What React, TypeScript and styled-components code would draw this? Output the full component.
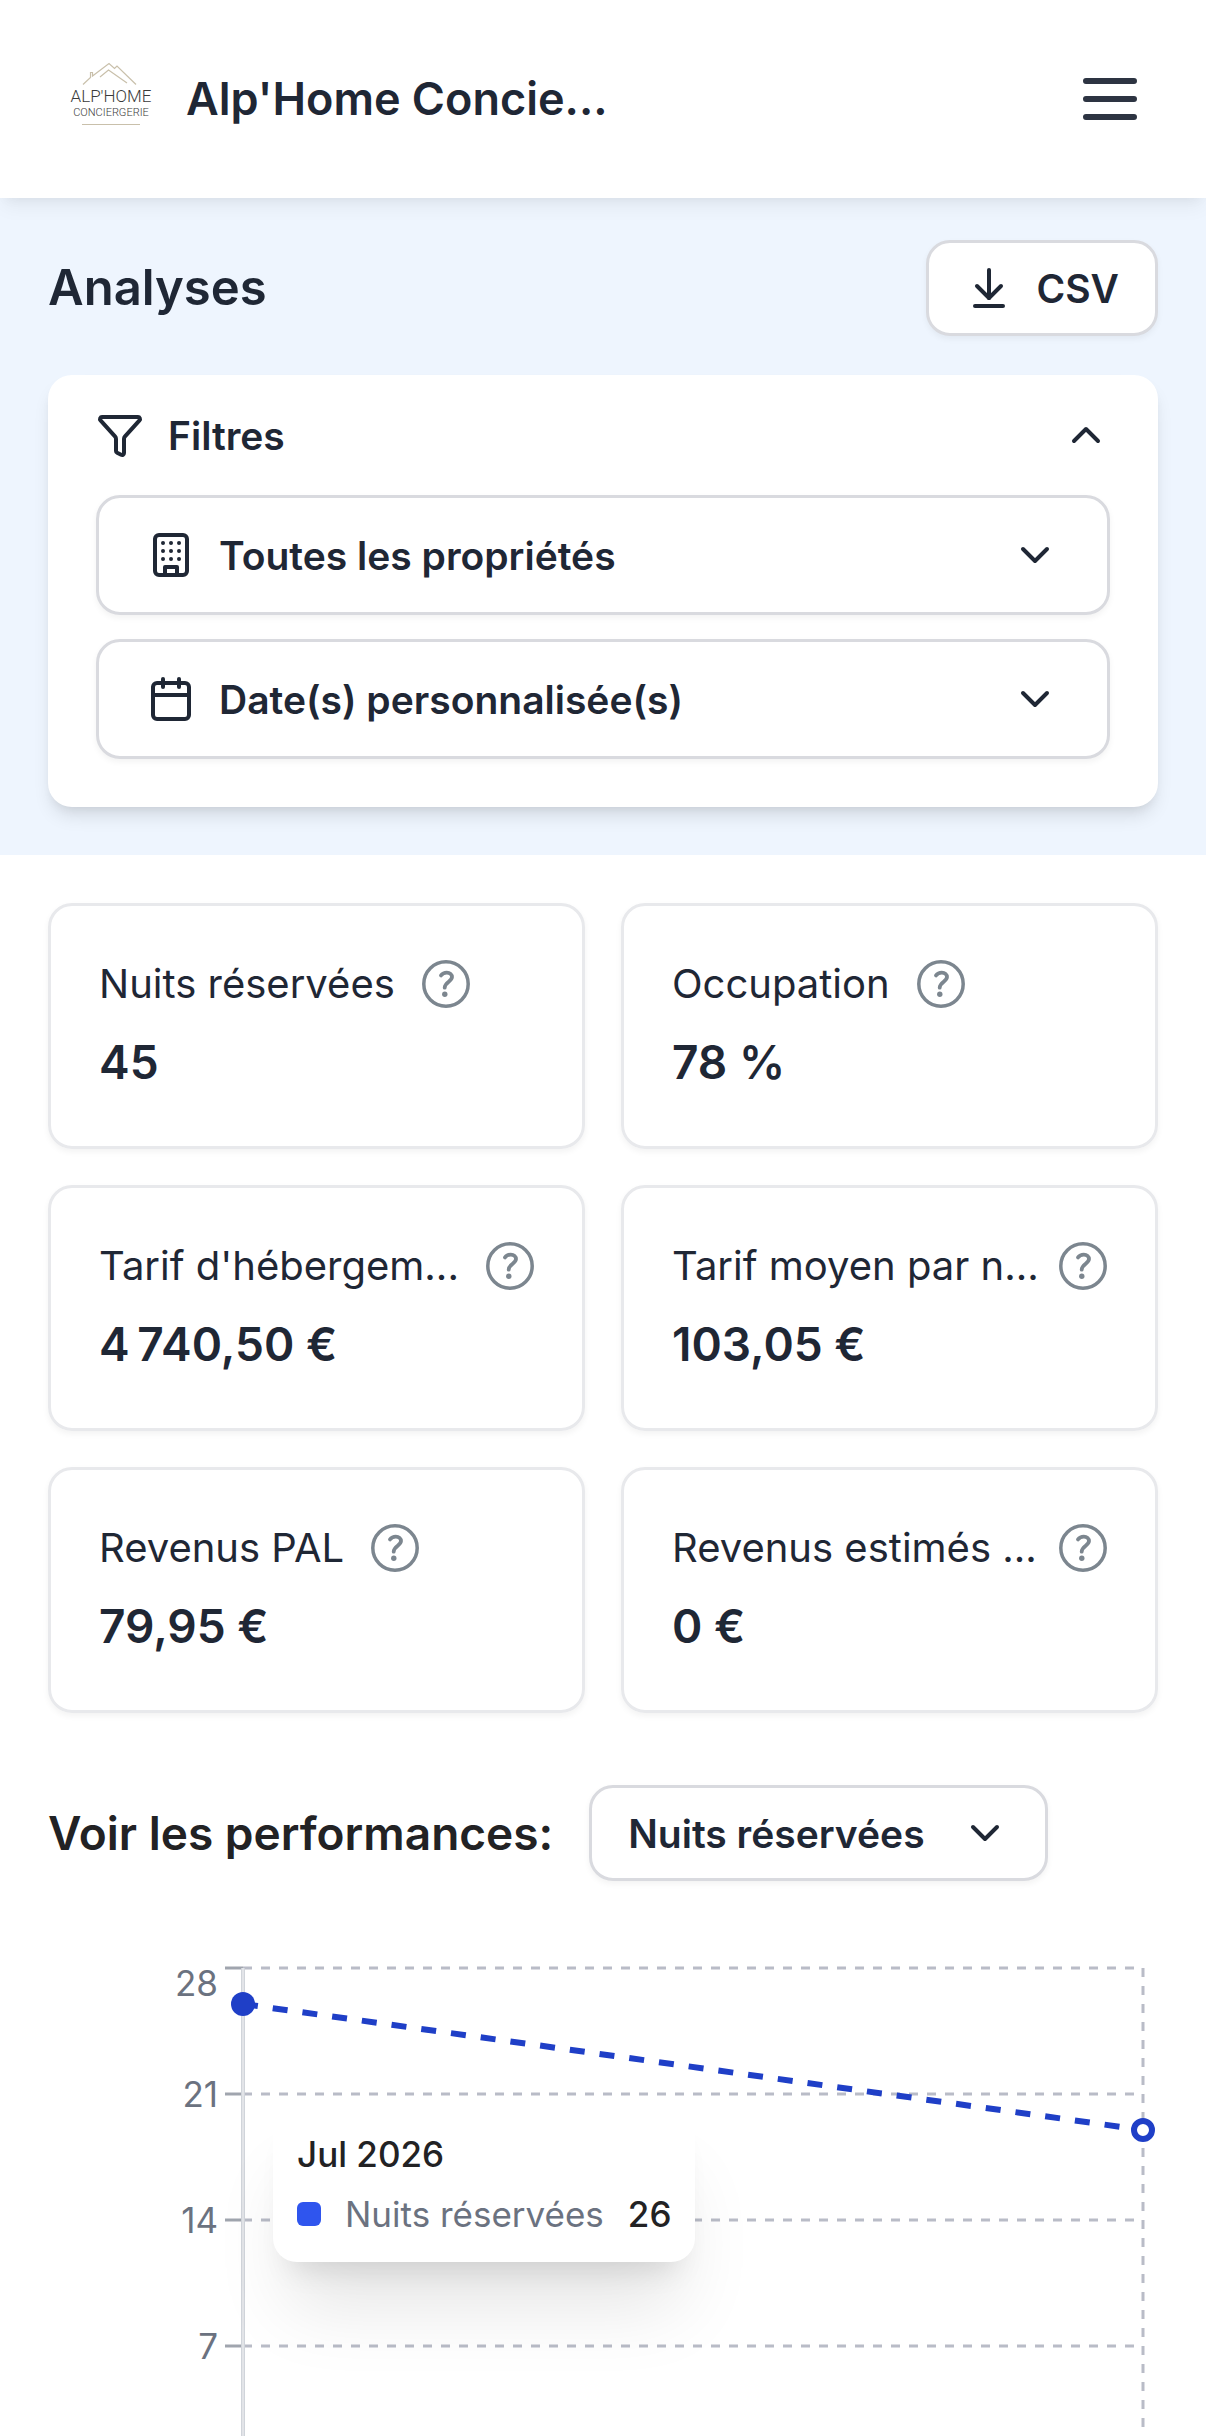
import React from 'react';
import styled, { createGlobalStyle } from 'styled-components';
import { ArrowDownToLine, Calendar, ChevronDown, ChevronUp, Funnel } from 'lucide-react';

const color = {
  ink: '#1f2735',
  heading: '#222224',
  muted: '#6b7280',
  help: '#7c868f',
  border: '#d9dadf',
  cardBorder: '#e8e9ec',
  grid: '#b9bcc7',
  axis: '#e2e4e8',
  tint: '#eef5fe',
  line: '#1f3fc7',
  swatch: '#2f55ee',
};

const GlobalStyle = createGlobalStyle`
  *, *::before, *::after { box-sizing: border-box; }
  body {
    margin: 0;
    background: #ffffff;
    color: ${color.ink};
    font-family: Inter, "Liberation Sans", sans-serif;
  }
  h1, h2, p, dl, dt, dd { margin: 0; }
  button, select { font: inherit; color: inherit; }
`;

const Page = styled.div`
  display: flex;
  flex-direction: column;
  height: 100vh;
  overflow: hidden;
`;

const Header = styled.header`
  position: relative;
  z-index: 1;
  display: flex;
  flex-shrink: 0;
  align-items: center;
  justify-content: space-between;
  height: 198px;
  padding: 0 60px;
  background: #ffffff;
  box-shadow: 0 12px 18px -3px rgba(0, 0, 0, 0.05), 0 6px 12px -6px rgba(0, 0, 0, 0.06);
`;

const Brand = styled.a`
  display: flex;
  align-items: center;
  gap: 24px;
  min-width: 0;
  color: inherit;
  text-decoration: none;
`;

const BrandName = styled.span`
  font-size: 45px;
  line-height: 72px;
  font-weight: 600;
  white-space: nowrap;
`;

const LogoText = styled.text`
  font-family: Roboto, sans-serif;
  font-weight: 300;
  fill: #3a3a3a;
`;

const IconButton = styled.button`
  display: flex;
  padding: 0;
  border: 0;
  background: none;
`;

const Main = styled.main`
  flex: 1;
  min-height: 0;
  overflow-y: auto;
  scrollbar-width: none;
`;

const Intro = styled.section`
  display: flex;
  flex-direction: column;
  gap: 39px;
  padding: 42px 48px 48px;
  background: ${color.tint};
`;

const TitleRow = styled.div`
  display: flex;
  align-items: center;
  justify-content: space-between;
`;

const Title = styled.h1`
  font-size: 49px;
  line-height: 84px;
  font-weight: 600;
`;

const ExportButton = styled.button`
  display: flex;
  align-items: center;
  gap: 24px;
  height: 96px;
  padding: 0 36px;
  border: 3px solid ${color.border};
  border-radius: 24px;
  background: #ffffff;
  box-shadow: 0 3px 6px rgba(0, 0, 0, 0.05);
  font-size: 39px;
  font-weight: 600;
`;

const FilterCard = styled.div`
  display: flex;
  flex-direction: column;
  gap: 24px;
  padding: 24px 48px 48px;
  border-radius: 24px;
  background: #ffffff;
  box-shadow: 0 12px 18px -3px rgba(0, 0, 0, 0.1), 0 6px 12px -6px rgba(0, 0, 0, 0.1);
`;

const FilterToggle = styled.button`
  display: flex;
  align-items: center;
  gap: 24px;
  height: 72px;
  padding: 0;
  border: 0;
  background: none;
  font-size: 39px;
  font-weight: 600;

  & > :last-child { margin-left: auto; }
`;

const Field = styled.label<{ $compact?: boolean }>`
  position: relative;
  display: flex;
  align-items: center;
  gap: 24px;
  flex: ${(p) => (p.$compact ? '0 1 459px' : '0 0 auto')};
  height: ${(p) => (p.$compact ? 96 : 120)}px;
  padding: 0 ${(p) => (p.$compact ? 36 : 48)}px;
  border: 3px solid ${color.border};
  border-radius: 24px;
  background: #ffffff;
  box-shadow: 0 3px 6px rgba(0, 0, 0, 0.05);
`;

const Select = styled.select`
  flex: 1;
  min-width: 0;
  height: 100%;
  padding: 0;
  border: 0;
  outline: 0;
  appearance: none;
  background: transparent;
  font-size: 39px;
  font-weight: 600;
`;

const StatGrid = styled.dl`
  display: grid;
  grid-template-columns: 1fr 1fr;
  gap: 36px;
  padding: 48px 48px 72px;
`;

const StatCard = styled.div`
  display: flex;
  flex-direction: column;
  gap: 12px;
  min-width: 0;
  padding: 48px;
  border: 3px solid ${color.cardBorder};
  border-radius: 24px;
  box-shadow: 0 3px 6px rgba(0, 0, 0, 0.05);
`;

const StatHead = styled.dt<{ $spread?: boolean }>`
  display: flex;
  align-items: center;
  justify-content: ${(p) => (p.$spread ? 'space-between' : 'flex-start')};
  gap: ${(p) => (p.$spread ? 12 : 27)}px;
`;

const StatLabel = styled.span`
  font-size: 40px;
  line-height: 60px;
  white-space: nowrap;
`;

const StatValue = styled.dd`
  font-size: 46px;
  line-height: 72px;
  font-weight: 600;
`;

const PerformanceRow = styled.div`
  display: flex;
  align-items: center;
  gap: 36px;
  padding: 0 48px;
`;

const PerformanceTitle = styled.h2`
  color: ${color.heading};
  font-size: 46px;
  line-height: 72px;
  font-weight: 600;
  white-space: nowrap;
`;

const ChartArea = styled.figure`
  position: relative;
  margin: 87px 63px 96px 243px;
`;

const Plot = styled.svg`
  display: block;
  width: 100%;
  height: 504px;
  overflow: visible;
`;

const AxisLabel = styled.text`
  fill: ${color.muted};
  font-size: 35px;
  text-anchor: end;
`;

const Tooltip = styled.figcaption`
  position: absolute;
  top: 138px;
  left: 30px;
  display: flex;
  flex-direction: column;
  gap: 12px;
  padding: 24px;
  border-radius: 24px;
  background: #ffffff;
  box-shadow: 0 60px 75px -15px rgba(0, 0, 0, 0.1), 0 24px 30px -18px rgba(0, 0, 0, 0.12);
  color: ${color.heading};
  font-size: 35px;
  line-height: 48px;
`;

const TooltipRow = styled.div`
  display: flex;
  align-items: center;
  gap: 24px;
`;

const Swatch = styled.span`
  width: 24px;
  height: 24px;
  border-radius: 6px;
  background: ${color.swatch};
`;

const TooltipLabel = styled.span`
  color: ${color.muted};
`;

const Strong = styled.span`
  font-weight: 500;
`;

const Logo = () => (
  <svg width="102" height="78" viewBox="60 60 102 78" role="img" aria-label="Alp'Home Conciergerie">
    <g fill="none" stroke="#c9c0ab" strokeWidth="1.2">
      <path d="M83 84.5 90.5 77.5V72.5H92.5V76L109 63.5 114.5 68.5 117 66 136 84.5" />
      <path d="M100 77 108.5 70 127 83" />
      <path d="M82 124.5H140" />
    </g>
    <LogoText x="111" y="102" fontSize="17" textAnchor="middle">ALP'HOME</LogoText>
    <LogoText x="111" y="116" fontSize="11" textAnchor="middle">CONCIERGERIE</LogoText>
  </svg>
);

const MenuIcon = () => (
  <svg width="72" height="72" viewBox="0 0 24 24" fill="none" stroke="#2d3442" strokeWidth="2" strokeLinecap="round">
    <path d="M4 6h16M4 12h16M4 18h16" />
  </svg>
);

const BuildingIcon = () => (
  <svg width="48" height="48" viewBox="0 0 24 24" fill="none" stroke="currentColor" strokeWidth="2" strokeLinecap="round" strokeLinejoin="round">
    <rect x="4" y="2" width="16" height="20" rx="2" />
    <path d="M9 22v-4h6v4" />
    <path d="M8 6h.01M12 6h.01M16 6h.01M8 10h.01M12 10h.01M16 10h.01M8 14h.01M12 14h.01M16 14h.01" />
  </svg>
);

const HelpIcon = () => (
  <svg width="48" height="48" viewBox="0 0 48 48" fill="none" stroke={color.help} strokeLinecap="round">
    <circle cx="24" cy="24" r="22.2" strokeWidth="3.5" />
    <path d="M19 15.4C20.4 13.5 22.6 12.6 24.8 12.6c3.1 0 5.2 1.8 5.2 4.5 0 4.4-7.2 4.9-7.3 10.6" strokeWidth="3.8" />
    <circle cx="22.8" cy="34.3" r="2.7" fill={color.help} stroke="none" />
  </svg>
);

const stats = [
  { label: 'Nuits réservées', value: '45' },
  { label: 'Occupation', value: '78 %' },
  { label: "Tarif d'hébergem...", value: '4\u202f740,50 €', spread: true },
  { label: 'Tarif moyen par n...', value: '103,05 €', spread: true },
  { label: 'Revenus PAL', value: '79,95 €' },
  { label: 'Revenus estimés ...', value: '0 €', spread: true },
];

const PX_PER_NIGHT = 18;
const MAX_NIGHTS = 28;
const yOf = (nights: number) => (MAX_NIGHTS - nights) * PX_PER_NIGHT;
const ticks = [28, 21, 14, 7];

function Chart() {
  return (
    <ChartArea>
      <Plot>
        {ticks.map((tick) => (
          <g key={tick}>
            <line x1="0" x2="100%" y1={yOf(tick)} y2={yOf(tick)} stroke={color.grid} strokeWidth="3" strokeDasharray="9 9" />
            <line x1="-18" x2="0" y1={yOf(tick)} y2={yOf(tick)} stroke="#a0a5ae" strokeWidth="3" />
            <AxisLabel x="-25" y={Math.max(yOf(tick), 15) + 13}>{tick}</AxisLabel>
          </g>
        ))}
        <line x1="100%" x2="100%" y1="0" y2={yOf(0)} stroke={color.grid} strokeWidth="3" strokeDasharray="9 9" />
        <line x1="0" x2="0" y1="0" y2={yOf(0)} stroke="#d0d4da" strokeWidth="4" />
        <line x1="0" x2="0" y1="0" y2={yOf(0)} stroke={color.axis} strokeWidth="2" />
        <line x1="0" x2="100%" y1={yOf(26)} y2={yOf(19)} stroke={color.line} strokeWidth="6" strokeDasharray="15 15" />
        <circle cx="0" cy={yOf(26)} r="12" fill={color.line} />
        <circle cx="100%" cy={yOf(19)} r="9" fill="#ffffff" stroke={color.line} strokeWidth="6" />
      </Plot>
      <Tooltip>
        <Strong>Jul 2026</Strong>
        <TooltipRow>
          <Swatch />
          <TooltipLabel>Nuits réservées</TooltipLabel>
          <Strong>26</Strong>
        </TooltipRow>
      </Tooltip>
    </ChartArea>
  );
}

export default function App() {
  return (
    <Page>
      <GlobalStyle />
      <Header>
        <Brand href="#">
          <Logo />
          <BrandName>Alp'Home Concie...</BrandName>
        </Brand>
        <IconButton type="button" aria-label="Menu">
          <MenuIcon />
        </IconButton>
      </Header>
      <Main>
        <Intro>
          <TitleRow>
            <Title>Analyses</Title>
            <ExportButton type="button">
              <ArrowDownToLine size={48} />
              CSV
            </ExportButton>
          </TitleRow>
          <FilterCard>
            <FilterToggle type="button" aria-expanded="true">
              <Funnel size={48} />
              Filtres
              <ChevronUp size={48} />
            </FilterToggle>
            <Field>
              <BuildingIcon />
              <Select aria-label="Propriétés">
                <option>Toutes les propriétés</option>
              </Select>
              <ChevronDown size={48} />
            </Field>
            <Field>
              <Calendar size={48} />
              <Select aria-label="Dates">
                <option>Date(s) personnalisée(s)</option>
              </Select>
              <ChevronDown size={48} />
            </Field>
          </FilterCard>
        </Intro>
        <StatGrid>
          {stats.map((stat) => (
            <StatCard key={stat.label}>
              <StatHead $spread={stat.spread}>
                <StatLabel>{stat.label}</StatLabel>
                <IconButton type="button" aria-label="Aide">
                  <HelpIcon />
                </IconButton>
              </StatHead>
              <StatValue>{stat.value}</StatValue>
            </StatCard>
          ))}
        </StatGrid>
        <PerformanceRow>
          <PerformanceTitle>Voir les performances:</PerformanceTitle>
          <Field $compact>
            <Select aria-label="Voir les performances">
              <option>Nuits réservées</option>
            </Select>
            <ChevronDown size={48} />
          </Field>
        </PerformanceRow>
        <Chart />
      </Main>
    </Page>
  );
}
